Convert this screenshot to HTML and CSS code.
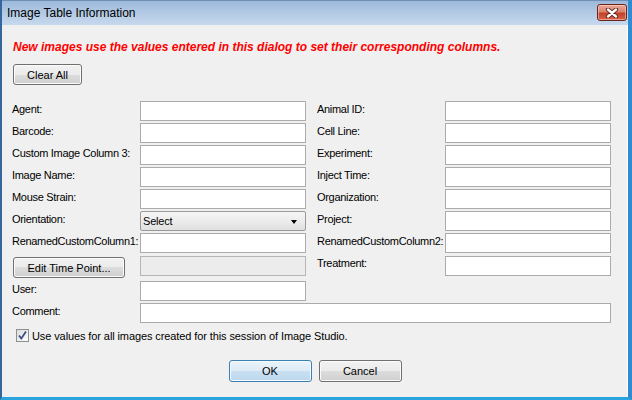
FILE: index.html
```html
<!DOCTYPE html>
<html>
<head>
<meta charset="utf-8">
<title>Image Table Information</title>
<link rel="stylesheet" href="styles.css">
</head>
<body>
<div class="window">
  <div class="titlebar">
    <span class="title">Image Table Information</span>
    <span class="close">
      <svg width="14" height="10" viewBox="0 0 14 10">
        <path d="M3 1.5 L11 8.5 M11 1.5 L3 8.5" stroke="#5a1e14" stroke-width="4.2" stroke-linecap="round"/>
        <path d="M3 1.5 L11 8.5 M11 1.5 L3 8.5" stroke="#ffffff" stroke-width="2.4" stroke-linecap="round"/>
      </svg>
    </span>
  </div>
  <div class="content">
    <p class="notice">New images use the values entered in this dialog to set their corresponding columns.</p>
    <button class="btn clear">Clear All</button>
    <div class="form">
      <span class="lbl">Agent:</span><span class="field"></span>
      <span class="lbl right">Animal ID:</span><span class="field"></span>

      <span class="lbl">Barcode:</span><span class="field"></span>
      <span class="lbl right">Cell Line:</span><span class="field"></span>

      <span class="lbl">Custom Image Column 3:</span><span class="field"></span>
      <span class="lbl right">Experiment:</span><span class="field"></span>

      <span class="lbl">Image Name:</span><span class="field"></span>
      <span class="lbl right">Inject Time:</span><span class="field"></span>

      <span class="lbl">Mouse Strain:</span><span class="field"></span>
      <span class="lbl right">Organization:</span><span class="field"></span>

      <span class="lbl">Orientation:</span>
      <span class="select"><span>Select</span><span class="arrow"></span></span>
      <span class="lbl right">Project:</span><span class="field"></span>

      <span class="lbl">RenamedCustomColumn1:</span><span class="field"></span>
      <span class="lbl right">RenamedCustomColumn2:</span><span class="field"></span>

      <button class="btn timepoint">Edit Time Point...</button>
      <span class="field disabled low"></span>
      <span class="lbl right low">Treatment:</span><span class="field low"></span>

      <span class="lbl">User:</span><span class="field"></span>
      <span class="empty"></span><span class="empty"></span>

      <span class="lbl">Comment:</span><span class="field wide"></span>
    </div>
    <div class="check">
      <span class="box">
        <svg width="11" height="11" viewBox="0 0 11 11">
          <path d="M2 5.5 L4.3 8.5 L9 1.5" fill="none" stroke="#3b4e8c" stroke-width="1.8"/>
        </svg>
      </span>
      <span>Use values for all images created for this session of Image Studio.</span>
    </div>
    <div class="actions">
      <button class="btn default">OK</button>
      <button class="btn">Cancel</button>
    </div>
  </div>
</div>
</body>
</html>
```
FILE: styles.css
```css
body {
  margin: 0;
  background: #f0f0f0;
}

.window {
  width: 632px;
  height: 400px;
  box-sizing: border-box;
  background: #f0f0f0;
  border-left: 2px solid #35679c;
  border-right: 4px solid #2f8bd2;
  border-bottom: 3px solid #2aa4dc;
  box-shadow: inset -1px 0 0 #ffffff;
  display: flex;
  flex-direction: column;
  font-family: "Liberation Sans", Arial, sans-serif;
  color: #000;
}

.titlebar {
  height: 25px;
  flex: none;
  display: flex;
  align-items: flex-start;
  justify-content: space-between;
  padding: 0 1px 0 5px;
  background: linear-gradient(#9cb9da, #b7cde6 60%, #c6d8ed);
  border-top: 1px solid #6f8fb5;
  box-sizing: border-box;
}

.title {
  font-size: 12px;
  line-height: 24px;
  color: #000;
}

.close {
  margin-top: 3px;
  width: 30px;
  height: 17px;
  box-sizing: border-box;
  border: 1px solid #6b2418;
  border-radius: 3px;
  background: linear-gradient(#eaa99b 0%, #d9826d 45%, #c2432b 55%, #d3644a 100%);
  box-shadow: inset 0 0 0 1px rgba(255, 220, 210, 0.5);
  display: flex;
  align-items: center;
  justify-content: center;
}

.content {
  flex: 1;
  padding: 0 0 0 10px;
}

.notice {
  margin: 15px 0 0 1px;
  font-size: 12px;
  line-height: 15px;
  font-weight: bold;
  font-style: italic;
  color: #ff0000;
}

.btn {
  font-family: "Liberation Sans", Arial, sans-serif;
  font-size: 11px;
  color: #000;
  border: 1px solid #707070;
  border-radius: 3px;
  background: linear-gradient(#f2f2f2 0%, #ebebeb 50%, #dddddd 50%, #cfcfcf 100%);
  box-shadow: inset 0 0 0 1px #fbfbfb;
  padding: 0;
  margin: 0;
}

.clear {
  display: block;
  margin: 9px 0 0 1px;
  width: 69px;
  height: 21px;
}

.form {
  margin-top: 16px;
  display: grid;
  grid-template-columns: 128px 166px 139px 166px;
  grid-template-rows: repeat(7, 20px) 24px 20px 20px;
  row-gap: 2px;
  align-items: center;
}

.lbl {
  font-size: 11px;
  letter-spacing: -0.3px;
  line-height: 16px;
  height: 20px;
  padding-bottom: 4px;
  box-sizing: border-box;
  white-space: nowrap;
}

.lbl.right {
  padding-left: 11px;
}

.field {
  display: block;
  height: 20px;
  box-sizing: border-box;
  border: 1px solid #ababab;
  background: #ffffff;
}

.field.disabled {
  background: #ececec;
  border-color: #b5b5b5;
}

.low {
  align-self: start;
  margin-top: 1px;
}

.lbl.low {
  margin-top: 0;
}

.field.wide {
  grid-column: 2 / 5;
}

.select {
  height: 20px;
  box-sizing: border-box;
  border: 1px solid #9a9a9a;
  border-radius: 2px;
  background: linear-gradient(#f5f5f5 0%, #ececec 50%, #e0e0e0 100%);
  display: flex;
  align-items: center;
  justify-content: space-between;
  padding: 0 8px 0 2px;
  font-size: 11px;
  letter-spacing: -0.2px;
}

.arrow {
  width: 0;
  height: 0;
  border-left: 3px solid transparent;
  border-right: 3px solid transparent;
  border-top: 4px solid #000;
  margin-top: 2px;
}

.timepoint {
  align-self: start;
  margin: 2px 0 0 1px;
  width: 112px;
  height: 21px;
}

.check {
  margin: 6px 0 0 4px;
  display: flex;
  align-items: center;
  gap: 3px;
  font-size: 11px;
  letter-spacing: -0.1px;
  height: 13px;
}

.box {
  width: 13px;
  height: 13px;
  box-sizing: border-box;
  border: 1px solid #8e8f8f;
  background: linear-gradient(135deg, #dcdcdc, #ffffff);
  display: flex;
  align-items: center;
  justify-content: center;
}

.actions {
  margin: 18px 0 0 -10px;
  display: flex;
  justify-content: center;
  gap: 7px;
}

.actions .btn {
  width: 83px;
  height: 22px;
}

.btn.default {
  border-color: #3c7fb1;
  background: linear-gradient(#eaf3fa 0%, #dcebf6 50%, #c9e0f1 50%, #bcd7ec 100%);
  box-shadow: inset 0 0 0 1px #f4fbff;
}
```
